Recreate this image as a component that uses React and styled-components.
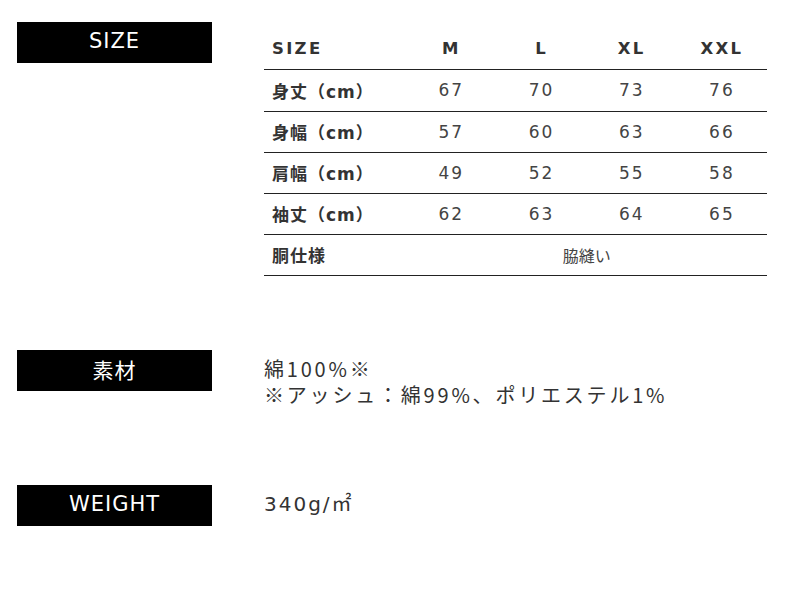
import React from "react";
import styled, { createGlobalStyle } from "styled-components";

const GlobalStyle = createGlobalStyle`
  body {
    margin: 0;
    background: #fff;
    font-family: "DejaVu Sans", "Noto Sans CJK JP", sans-serif;
    color: #333;
  }
`;

const Page = styled.div`
  padding: 22px 0 0 17px;
`;

const Section = styled.section`
  display: flex;
  align-items: flex-start;
  gap: 52px;
  margin-bottom: ${({ $space }) => $space || 0}px;
`;

const Label = styled.div`
  flex-shrink: 0;
  width: 195px;
  height: 41px;
  background: #000;
  color: #fff;
  display: flex;
  align-items: center;
  justify-content: center;
  padding-bottom: 3px;
  box-sizing: border-box;
  font-size: 21px;
  letter-spacing: 1px;
`;

const Table = styled.table`
  margin-top: 6px;
  width: 503px;
  border-collapse: collapse;
  table-layout: fixed;
`;

const Row = styled.tr`
  height: ${({ $h }) => $h || 41}px;
  border-bottom: 1px solid #222;
`;

const Head = styled.th`
  font-size: 16.5px;
  font-weight: bold;
  letter-spacing: 2.3px;
  color: #333;
  text-align: ${({ $left }) => ($left ? "left" : "center")};
  padding: 0 0 0 ${({ $left }) => ($left ? "8px" : "0")};
  width: ${({ $left }) => ($left ? "134px" : "90px")};
`;

const RowHead = styled.th`
  font-size: 17px;
  font-weight: bold;
  letter-spacing: 1px;
  color: #333;
  text-align: left;
  padding: 0 0 0 8px;
  white-space: nowrap;
`;

const Cell = styled.td`
  color: #444;
  text-align: center;
  padding: 0;
  font-family: ${({ $jp }) =>
    $jp ? '"Noto Sans CJK JP", sans-serif' : '"DejaVu Sans", sans-serif'};
  font-size: ${({ $jp }) => ($jp ? "16px" : "17px")};
  letter-spacing: ${({ $jp }) => ($jp ? "0" : "2px")};
`;

const Text = styled.div`
  margin-top: ${({ $top }) => $top}px;
  font-family: ${({ $jp }) =>
    $jp
      ? '"Noto Sans CJK JP", sans-serif'
      : '"DejaVu Sans", "Noto Sans CJK JP", sans-serif'};
  font-size: 20px;
  line-height: 26px;
  letter-spacing: ${({ $jp }) => ($jp ? "2.8px" : "2px")};
  color: #333;
`;

const sizes = ["M", "L", "XL", "XXL"];

const rows = [
  ["身丈（cm）", 67, 70, 73, 76],
  ["身幅（cm）", 57, 60, 63, 66],
  ["肩幅（cm）", 49, 52, 55, 58],
  ["袖丈（cm）", 62, 63, 64, 65],
];

const App = () => {
  return (
    <Page>
      <GlobalStyle />
      <Section $space={74}>
        <Label>SIZE</Label>
        <Table>
          <thead>
            <Row>
              <Head $left>SIZE</Head>
              {sizes.map((s) => (
                <Head key={s}>{s}</Head>
              ))}
            </Row>
          </thead>
          <tbody>
            {rows.map(([name, ...vals], r) => (
              <Row key={name} $h={r === 0 ? 42 : 41}>
                <RowHead>{name}</RowHead>
                {vals.map((v, i) => (
                  <Cell key={i}>{v}</Cell>
                ))}
              </Row>
            ))}
            <Row>
              <RowHead>胴仕様</RowHead>
              <Cell $jp colSpan={4}>
                脇縫い
              </Cell>
            </Row>
          </tbody>
        </Table>
      </Section>

      <Section $space={77}>
        <Label>素材</Label>
        <Text $jp $top={6}>
          綿100%※
          <br />
          ※アッシュ：綿99%、ポリエステル1%
        </Text>
      </Section>

      <Section>
        <Label>WEIGHT</Label>
        <Text $top={6}>340g/㎡</Text>
      </Section>
    </Page>
  );
};

export default App;
